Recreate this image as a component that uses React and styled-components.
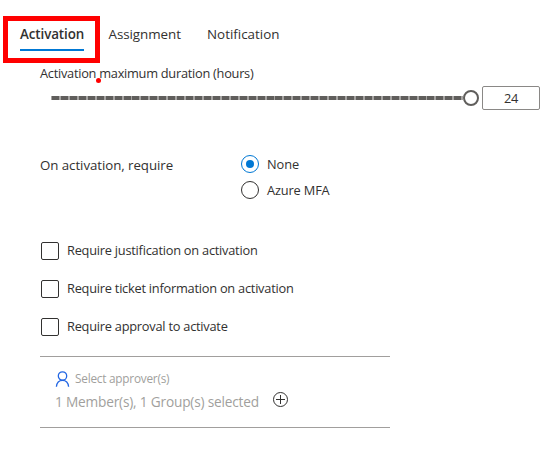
import React from "react";
import styled, { createGlobalStyle } from "styled-components";

const Global = createGlobalStyle`
  * { box-sizing: border-box; }
  body { margin: 0; background: #fff; color: #323130; font-family: "Open Sans", "Noto Sans", sans-serif; }
`;
const Page = styled.main`
  position: relative;
  width: 555px;
  height: 452px;
  overflow: hidden;
  display: flex;
  flex-direction: column;
`;
const Text = styled.span`
  display: block;
  white-space: nowrap;
  font-size: ${(p) => p.$size || 12.8}px;
  font-weight: ${(p) => p.$weight || 400};
  letter-spacing: ${(p) => p.$track ?? -0.24}px;
  line-height: 20px;
  color: ${(p) => p.$color || "#323130"};
`;
const Tabs = styled.nav`
  display: flex;
  height: 51px;
  padding: 24px 0 0 20px;
`;
const Tab = styled.div`
  width: ${(p) => p.$width}px;
  height: 27px;
  margin-right: ${(p) => p.$gap}px;
  border-bottom: 2px solid ${(p) => (p.$active ? "#0078d4" : "transparent")};
`;
const Highlight = styled.div`
  position: absolute;
  left: 3px;
  top: 16px;
  width: 97px;
  height: 47px;
  border: 5px solid #f00;
`;
const Dot = styled.div`
  position: absolute;
  left: 95.5px;
  top: 77.5px;
  width: 5px;
  height: 5px;
  border-radius: 50%;
  background: #f00;
`;
const Label = styled.div`
  height: 34px;
  padding: 12px 0 0 40px;
`;
const SliderRow = styled.div`
  display: flex;
  align-items: center;
  height: 26px;
  padding-left: 51px;
`;
const Rail = styled.div`
  width: 412px;
  height: 4px;
  background: repeating-linear-gradient(90deg, #a6a4a2 0 1px, #605e5c 1px 8px, #a6a4a2 8px 8.94px);
`;
const Thumb = styled.div`
  width: 16px;
  height: 16px;
  border: 2px solid #605e5c;
  border-radius: 50%;
`;
const NumberBox = styled.div`
  width: 58px;
  height: 24px;
  margin-left: 3px;
  border: 1px solid #8a8886;
  border-radius: 2px;
  padding: 1px 0 0 21px;
`;
const RequireRow = styled.section`
  display: grid;
  grid-template-columns: 201px auto;
  padding: 44px 0 0 40px;
  height: 129px;
`;
const Option = styled.div`
  display: flex;
  align-items: center;
  gap: 8px;
  height: 18px;
  ${Text} { margin-bottom: 2px; }
`;
const RadioOption = styled(Option)`
  ${Text} { margin-bottom: 0; }
`;
const Options = styled.div`
  display: flex;
  flex-direction: column;
  gap: 8px;
`;
const Radio = styled.div`
  display: grid;
  place-items: center;
  width: 18px;
  height: 18px;
  border: 1px solid ${(p) => (p.$on ? "#0078d4" : "#323130")};
  border-radius: 50%;
  &::after {
    content: "";
    width: 8px;
    height: 8px;
    border-radius: 50%;
    background: ${(p) => (p.$on ? "#0078d4" : "transparent")};
  }
`;
const Checks = styled.section`
  display: flex;
  flex-direction: column;
  gap: 20px;
  padding: 2px 0 0 41px;
  height: 116px;
`;
const Box = styled.div`
  width: 18px;
  height: 18px;
  border: 1px solid #323130;
  border-radius: 2px;
`;
const Approvers = styled.section`
  width: 350px;
  height: 72px;
  margin-left: 40px;
  border: solid #a19f9d;
  border-width: 1px 0;
  padding: 12px 0 0 15px;
`;
const Line = styled.div`
  display: flex;
  height: ${(p) => p.$height}px;
  gap: ${(p) => p.$gap}px;
`;
const PersonIcon = styled.svg`
  margin-top: 1px;
`;
const ApproverLabel = styled(Text)`
  line-height: 19px;
`;

export default function App() {
  return (
    <Page>
      <Global />
      <Tabs>
        <Tab $active $width={64} $gap={24.5}><Text $weight={600} $size={13.4} $track={-0.1}>Activation</Text></Tab>
        <Tab $width={72} $gap={26.5}><Text $size={13.4} $track={-0.06}>Assignment</Text></Tab>
        <Tab $width={72} $gap={0}><Text $size={13.4} $track={0}>Notification</Text></Tab>
      </Tabs>
      <Label><Text $track={-0.27}>Activation maximum duration (hours)</Text></Label>
      <SliderRow>
        <Rail />
        <Thumb />
        <NumberBox><Text>24</Text></NumberBox>
      </SliderRow>
      <RequireRow>
        <Text $size={13.3} $track={-0.06}>On activation, require</Text>
        <Options>
          <RadioOption><Radio $on /><Text $track={-0.1}>None</Text></RadioOption>
          <RadioOption><Radio /><Text $track={-0.15}>Azure MFA</Text></RadioOption>
        </Options>
      </RequireRow>
      <Checks>
        <Option><Box /><Text>Require justification on activation</Text></Option>
        <Option><Box /><Text>Require ticket information on activation</Text></Option>
        <Option><Box /><Text>Require approval to activate</Text></Option>
      </Checks>
      <Approvers>
        <Line $height={23} $gap={5}>
          <PersonIcon width="15" height="18" viewBox="0 0 15 18" fill="none" stroke="#2266e3" strokeWidth="1.3">
            <circle cx="7.5" cy="6" r="4.2" />
            <path d="M1.4 16.8 C1.8 12.6 4.4 10.4 7.5 10.4 S13.2 12.6 13.6 16.8" />
          </PersonIcon>
          <ApproverLabel $size={11.8} $track={-0.23} $color="#a19f9d">Select approver(s)</ApproverLabel>
        </Line>
        <Line $height={24} $gap={13}>
          <Text $size={13.7} $track={-0.2} $color="#a19f9d">1 Member(s), 1 Group(s) selected</Text>
          <svg width="16" height="16" viewBox="0 0 16 16" fill="none" stroke="#323130">
            <circle cx="8.5" cy="7.5" r="7" />
            <path d="M4 7.5H13M8.5 3V12" />
          </svg>
        </Line>
      </Approvers>
      <Highlight />
      <Dot />
    </Page>
  );
}
